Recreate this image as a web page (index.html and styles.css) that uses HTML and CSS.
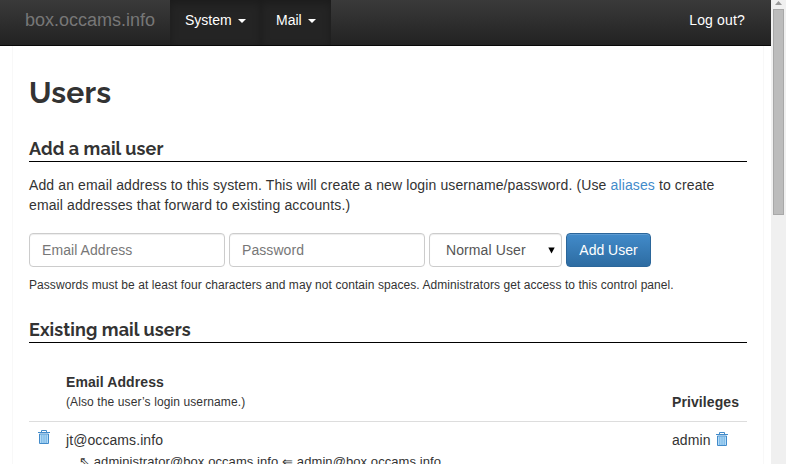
FILE: index.html
```html
<!DOCTYPE html>
<html lang="en">
<head>
<meta charset="utf-8">
<title>Users</title>
<link rel="stylesheet" href="styles.css">
</head>
<body>
<svg class="defs" width="0" height="0"><symbol id="trash" viewBox="0 0 12 14"><path fill="#b5dcf8" d="M1 4h10v9H1z"/><path fill="none" stroke="#428bca" d="M0 2.5h12M3.5 2V.5h5V2M1.5 4v9.5h9V4z"/><path fill="none" stroke="#5ba4dc" stroke-width=".8" d="M3.8 5v8M6 5v8M8.2 5v8"/></symbol></svg>
<div class="window">
  <div class="page">
    <nav class="navbar">
      <a class="brand">box.occams.info</a>
      <a class="menu">System <i class="caret"></i></a>
      <a class="menu menu-mail">Mail <i class="caret"></i></a>
      <a class="logout">Log out?</a>
    </nav>
    <main class="panel">
      <h2>Users</h2>
      <h3>Add a mail user</h3>
      <p class="intro">Add an email address to this system. This will create a new login username/password. (Use <a>aliases</a> to create<br>email addresses that forward to existing accounts.)</p>
      <form class="form">
        <input class="control" placeholder="Email Address">
        <input class="control" placeholder="Password">
        <div class="control select"><span>Normal User</span><svg width="7" height="7" viewBox="0 0 7 7"><path d="M.3 .5h6.4L3.5 6.5z"/></svg></div>
        <button type="button">Add User</button>
      </form>
      <p class="hint">Passwords must be at least four characters and may not contain spaces. Administrators get access to this control panel.</p>
      <h3>Existing mail users</h3>
      <div class="row head">
        <div class="address"><b>Email Address</b><small>(Also the user’s login username.)</small></div>
        <b class="privileges">Privileges</b>
      </div>
      <div class="row user">
        <svg class="trash" width="12" height="14"><use href="#trash"/></svg>
        <div class="address">jt@occams.info</div>
        <div class="privileges">admin <svg class="trash-inline" width="12" height="14"><use href="#trash"/></svg></div>
      </div>
      <div class="alias"><span class="arrow">⇖</span> administrator@box.occams.info <span class="from">⇐</span> admin@box.occams.info</div>
    </main>
  </div>
  <div class="scrollbar"><svg width="7" height="4" viewBox="0 0 7 4"><path fill="#999" d="M3.5 0 7 4H0z"/></svg><div class="thumb"></div></div>
</div>
</body>
</html>
```
FILE: styles.css
```css
* { box-sizing: border-box; }
body { margin: 0; overflow: hidden; font: 14px/20px "Liberation Sans", Arial, sans-serif; color: #333; background: #fff; }
.defs { display: none; }
.window { display: flex; height: 464px; overflow: hidden; }
.page { width: 771px; overflow: hidden; }
.navbar { display: flex; height: 46px; border-bottom: 1px solid #080808; background: linear-gradient(#3a3a3a, #222); color: #fff; line-height: 40px; }
.brand { width: 170px; padding-left: 25px; font-size: 18px; color: #777; }
.menu { display: flex; align-items: center; gap: 6px; width: 91px; height: 45px; padding: 0 0 5px 15px; background: #242424; box-shadow: inset 0 3px 9px rgba(0,0,0,.25); }
.menu-mail { width: 70px; }
.caret { border: 4px solid transparent; border-top-color: #fff; border-bottom: 0; margin-top: 2px; }
.logout { margin-left: auto; padding-right: 26px; letter-spacing: .16px; }
.panel { width: 752px; height: 418px; margin-left: 12px; padding: 0 16px; border: solid #f8f8f8; border-width: 0 1px; overflow: hidden; }
h2 { margin: 30px 0 28px; font: bold 30px/33px Raleway, Lato, sans-serif; letter-spacing: .2px; }
h3 { height: 25px; margin: 0; padding-top: 2px; border-bottom: 1px solid #000; font: bold 18px/20px Raleway, Lato, sans-serif; letter-spacing: .1px; white-space: nowrap; }
.intro { margin: 13px 0 18px; letter-spacing: .118px; white-space: nowrap; }
.intro a { color: #428bca; }
.form { display: flex; gap: 4px; height: 34px; }
.control { width: 196px; height: 34px; padding: 0 12px; border: 1px solid #ccc; border-radius: 4px; font: inherit; letter-spacing: .07px; color: #555; background: #fff; box-shadow: inset 0 1px 1px rgba(0,0,0,.075); }
.control::placeholder { color: #777; opacity: 1; }
.select { display: flex; align-items: center; justify-content: space-between; width: 133px; padding: 0 6px 0 16px; letter-spacing: .1px; }
.select svg { fill: #000; }
button { width: 85px; padding: 0; border: 1px solid #2b669a; border-radius: 4px; background: linear-gradient(#428bca, #2d6ca2); box-shadow: inset 0 1px rgba(255,255,255,.15); color: #fff; font: inherit; }
.hint { margin: 8px 0 23px; font-size: 12px; letter-spacing: .065px; white-space: nowrap; }
.row { display: flex; }
.head { height: 79px; padding-top: 29px; border-bottom: 1px solid #ddd; letter-spacing: .09px; }
.head .address { padding-left: 37px; }
.address b, .address small { display: block; }
small { font-size: 12px; line-height: 21px; letter-spacing: .11px; }
.privileges { width: 75px; margin-left: auto; }
.head .privileges { margin-top: 20px; }
.user { height: 30px; padding-top: 8px; letter-spacing: .08px; }
.trash { margin-left: 9px; }
.user .address { padding-left: 16px; }
.trash-inline { margin-left: 1px; vertical-align: -1px; }
.alias { padding-left: 50px; font-size: 13px; line-height: 20px; letter-spacing: .08px; white-space: nowrap; }
.scrollbar { width: 15px; background: #f0f0f0; }
.scrollbar svg { display: block; margin: 1px 0 0 4px; }
.thumb { width: 11px; height: 206px; margin: 4px 0 0 2px; border: 1px solid #a8a8a8; background: #bcbcbc; }
```
